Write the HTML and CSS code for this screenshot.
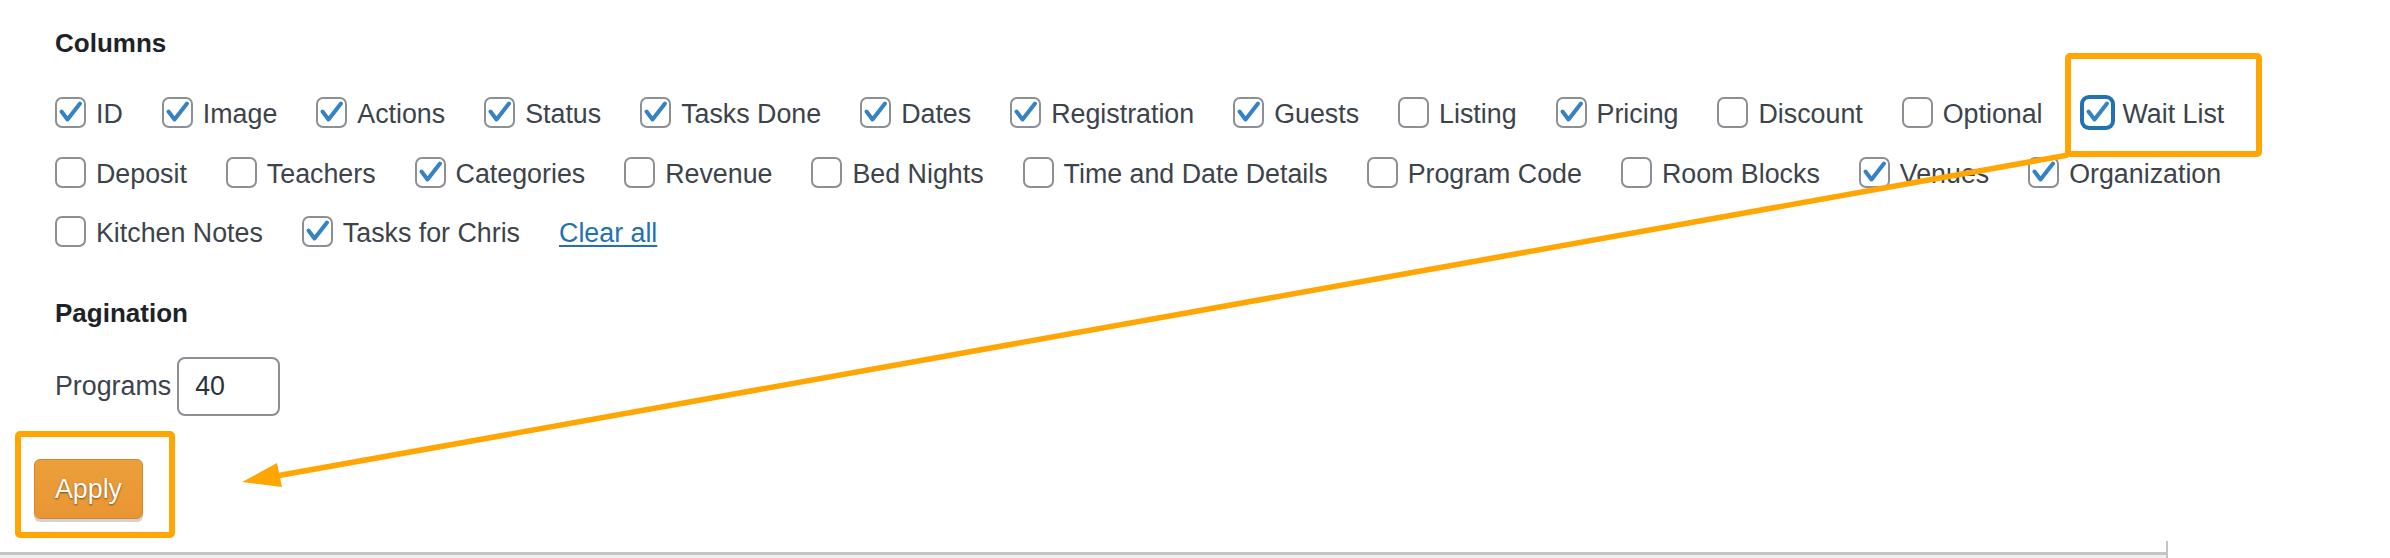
FILE: index.html
```html
<!DOCTYPE html>
<html lang="en">
<head>
<meta charset="utf-8">
<title>Screen Options</title>
<link rel="stylesheet" href="styles.css">
</head>
<body>
<div class="page">
  <div class="panel">
    <h5 class="legend">Columns</h5>
    <div class="prefs">
      <label class="opt"><span class="cb on"><svg viewBox="0 0 31 31"><path d="M6.5 14.5 L12.5 22.5 L25 6.5"/></svg></span><span class="lbl">ID</span></label>
      <label class="opt"><span class="cb on"><svg viewBox="0 0 31 31"><path d="M6.5 14.5 L12.5 22.5 L25 6.5"/></svg></span><span class="lbl">Image</span></label>
      <label class="opt"><span class="cb on"><svg viewBox="0 0 31 31"><path d="M6.5 14.5 L12.5 22.5 L25 6.5"/></svg></span><span class="lbl">Actions</span></label>
      <label class="opt"><span class="cb on"><svg viewBox="0 0 31 31"><path d="M6.5 14.5 L12.5 22.5 L25 6.5"/></svg></span><span class="lbl">Status</span></label>
      <label class="opt"><span class="cb on"><svg viewBox="0 0 31 31"><path d="M6.5 14.5 L12.5 22.5 L25 6.5"/></svg></span><span class="lbl">Tasks Done</span></label>
      <label class="opt"><span class="cb on"><svg viewBox="0 0 31 31"><path d="M6.5 14.5 L12.5 22.5 L25 6.5"/></svg></span><span class="lbl">Dates</span></label>
      <label class="opt"><span class="cb on"><svg viewBox="0 0 31 31"><path d="M6.5 14.5 L12.5 22.5 L25 6.5"/></svg></span><span class="lbl">Registration</span></label>
      <label class="opt"><span class="cb on"><svg viewBox="0 0 31 31"><path d="M6.5 14.5 L12.5 22.5 L25 6.5"/></svg></span><span class="lbl">Guests</span></label>
      <label class="opt"><span class="cb"></span><span class="lbl">Listing</span></label>
      <label class="opt"><span class="cb on"><svg viewBox="0 0 31 31"><path d="M6.5 14.5 L12.5 22.5 L25 6.5"/></svg></span><span class="lbl">Pricing</span></label>
      <label class="opt"><span class="cb"></span><span class="lbl">Discount</span></label>
      <label class="opt"><span class="cb"></span><span class="lbl">Optional</span></label>
      <label class="opt"><span class="cb on focus"><svg viewBox="0 0 31 31"><path d="M6.5 14.5 L12.5 22.5 L25 6.5"/></svg></span><span class="lbl">Wait List</span></label>
      <label class="opt"><span class="cb"></span><span class="lbl">Deposit</span></label>
      <label class="opt"><span class="cb"></span><span class="lbl">Teachers</span></label>
      <label class="opt"><span class="cb on"><svg viewBox="0 0 31 31"><path d="M6.5 14.5 L12.5 22.5 L25 6.5"/></svg></span><span class="lbl">Categories</span></label>
      <label class="opt"><span class="cb"></span><span class="lbl">Revenue</span></label>
      <label class="opt"><span class="cb"></span><span class="lbl">Bed Nights</span></label>
      <label class="opt"><span class="cb"></span><span class="lbl">Time and Date Details</span></label>
      <label class="opt"><span class="cb"></span><span class="lbl">Program Code</span></label>
      <label class="opt"><span class="cb"></span><span class="lbl">Room Blocks</span></label>
      <label class="opt"><span class="cb on"><svg viewBox="0 0 31 31"><path d="M6.5 14.5 L12.5 22.5 L25 6.5"/></svg></span><span class="lbl">Venues</span></label>
      <label class="opt"><span class="cb on"><svg viewBox="0 0 31 31"><path d="M6.5 14.5 L12.5 22.5 L25 6.5"/></svg></span><span class="lbl">Organization</span></label>
      <label class="opt"><span class="cb"></span><span class="lbl">Kitchen Notes</span></label>
      <label class="opt"><span class="cb on"><svg viewBox="0 0 31 31"><path d="M6.5 14.5 L12.5 22.5 L25 6.5"/></svg></span><span class="lbl">Tasks for Chris</span></label>
      <a class="clear" href="#">Clear all</a>
    </div>

    <h5 class="legend legend-pag">Pagination</h5>
    <div class="per-page">
      <label class="pp-label" for="pp">Programs</label>
      <input id="pp" class="pp-input" type="text" value="40">
    </div>

    <div class="submit-row">
      <button class="apply" type="button">Apply</button>
    </div>
  </div>
  <div class="edge">
    <div class="edge-fill">
      <div class="edge-line"></div>
      <div class="edge-bg"></div>
    </div>
  </div>

  <svg class="annot" width="2390" height="558" viewBox="0 0 2390 558">
    <rect x="2068" y="56" width="191" height="98" rx="2" fill="none" stroke="#ffa602" stroke-width="6"/>
    <rect x="18" y="434" width="154" height="101" rx="2" fill="none" stroke="#ffa602" stroke-width="6"/>
    <line x1="2068" y1="155" x2="276" y2="476" stroke="#ffa602" stroke-width="5.5"/>
    <polygon points="242,482 277,463 282,487" fill="#ffa602"/>
  </svg>
</div>
</body>
</html>
```

FILE: styles.css
```css
html, body {
  margin: 0;
  padding: 0;
  background: #ffffff;
}

body {
  width: 2390px;
  height: 558px;
  overflow: hidden;
  font-family: "Liberation Sans", Arial, sans-serif;
  color: #3c434a;
}

.page {
  position: relative;
  width: 2390px;
  height: 558px;
}

.panel {
  box-sizing: border-box;
  height: 541px;
  padding: 28px 40px 0 55px;
}

.legend {
  margin: 0;
  font-size: 26px;
  line-height: 30px;
  font-weight: 700;
  color: #1d2327;
}

.prefs {
  margin-top: 39px;
  display: flex;
  flex-wrap: wrap;
  column-gap: 39px;
  row-gap: 28.5px;
}

.opt {
  display: flex;
  align-items: flex-start;
  height: 31px;
  gap: 10px;
}

.cb {
  box-sizing: border-box;
  flex: none;
  width: 31px;
  height: 31px;
  border: 2px solid #8c8f94;
  border-radius: 7px;
  background: #fff;
  display: flex;
  align-items: center;
  justify-content: center;
}

.cb svg {
  width: 31px;
  height: 31px;
  flex: none;
}

.cb path {
  fill: none;
  stroke: #3582c4;
  stroke-width: 4;
  stroke-linecap: round;
  stroke-linejoin: round;
}

.cb.focus {
  border: 2px solid #2271b1;
  box-shadow: 0 0 0 2px #2271b1;
}

.lbl {
  font-size: 26.8px;
  line-height: 35px;
  white-space: nowrap;
}

.clear {
  display: block;
  height: 31px;
  font-size: 26.8px;
  line-height: 35px;
  color: #2271b1;
  text-decoration: underline;
  text-underline-offset: 3px;
  text-decoration-thickness: 2px;
  white-space: nowrap;
}

.legend-pag {
  margin-top: 51px;
}

.per-page {
  margin-top: 29px;
  display: flex;
  align-items: center;
  gap: 6px;
  height: 59px;
}

.pp-label {
  font-size: 26.8px;
  line-height: 59px;
}

.pp-input {
  box-sizing: border-box;
  width: 103px;
  height: 59px;
  margin: 0;
  padding: 0 0 0 16px;
  border: 2px solid #8c8f94;
  border-radius: 8px;
  background: #fff;
  font-family: "Liberation Sans", Arial, sans-serif;
  font-size: 26.8px;
  color: #2c3338;
  outline: none;
}

.submit-row {
  margin: 43px 0 0 -21px;
}

.apply {
  box-sizing: border-box;
  width: 109px;
  height: 60px;
  margin: 0;
  padding: 0;
  border: 1.5px solid #d4862a;
  border-radius: 6px;
  background: linear-gradient(#ec9f3a, #e89633);
  box-shadow: 0 3px 0 #d3d3d3;
  font-family: "Liberation Sans", Arial, sans-serif;
  font-size: 26.8px;
  color: #ffffff;
  text-shadow: 0 1px 2px rgba(90, 45, 0, 0.75);
}

.edge {
  display: flex;
  height: 17px;
}

.edge-fill {
  width: 2166px;
  border-right: 2px solid #c3c4c7;
  display: flex;
  flex-direction: column;
  justify-content: flex-end;
}

.edge-line {
  height: 3px;
  background: #c3c4c7;
}

.edge-bg {
  height: 3px;
  background: #f0f0f1;
}

.annot {
  position: absolute;
  top: 0;
  left: 0;
  pointer-events: none;
}
```
